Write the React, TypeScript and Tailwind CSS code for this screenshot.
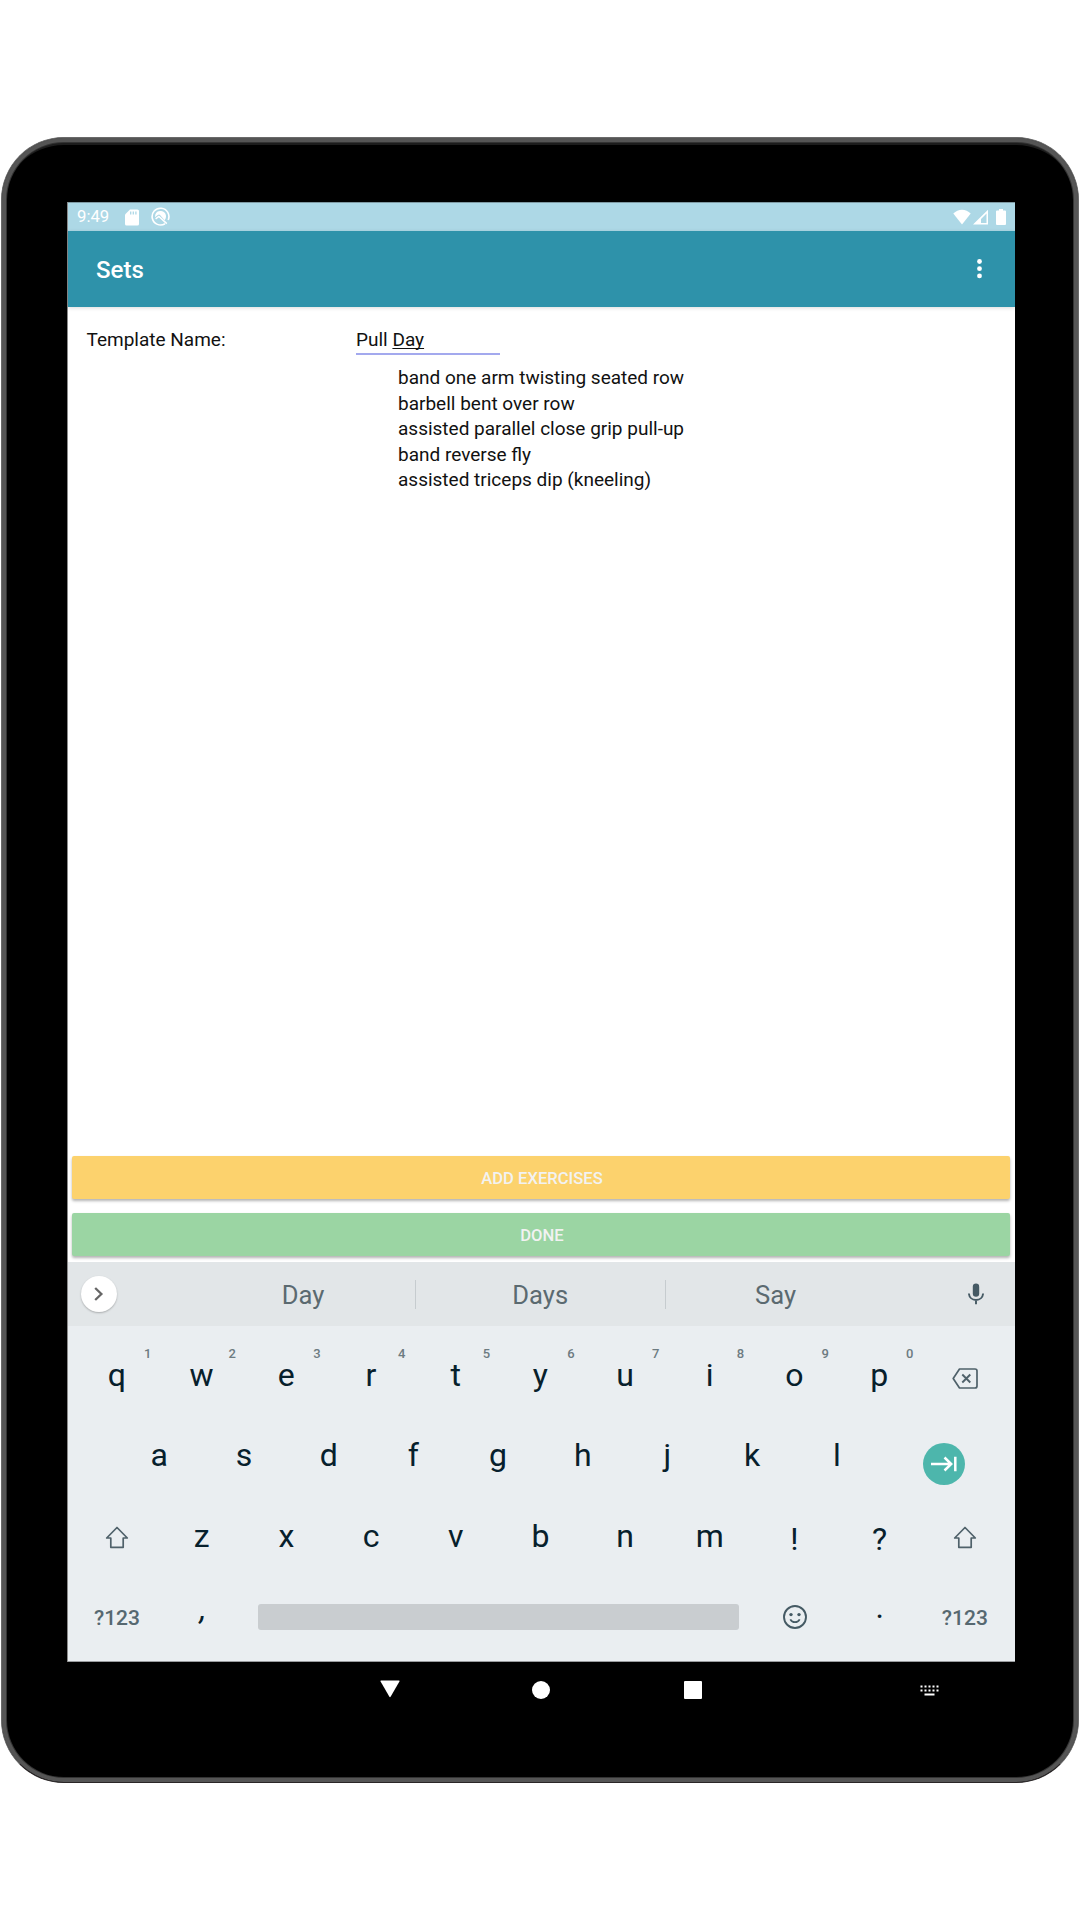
import React from "react";

type Hinted = { key: string; hint: string };

const TOP_ROW: Hinted[] = [
  { key: "q", hint: "1" },
  { key: "w", hint: "2" },
  { key: "e", hint: "3" },
  { key: "r", hint: "4" },
  { key: "t", hint: "5" },
  { key: "y", hint: "6" },
  { key: "u", hint: "7" },
  { key: "i", hint: "8" },
  { key: "o", hint: "9" },
  { key: "p", hint: "0" },
];
const HOME_ROW = ["a", "s", "d", "f", "g", "h", "j", "k", "l"];
const BOTTOM_ROW = ["z", "x", "c", "v", "b", "n", "m"];
const EXERCISES = [
  "band one arm twisting seated row",
  "barbell bent over row",
  "assisted parallel close grip pull-up",
  "band reverse fly",
  "assisted triceps dip (kneeling)",
];

function StatusBar() {
  return (
    <div className="flex h-[29px] items-center border-t border-[#7f9aa3] bg-[#add8e6] pl-[9px] pr-[9px] text-white">
      <span className="w-[48px] text-[16.7px] leading-[30px]">9:49</span>
      <svg className="h-[17px] w-[14px]" viewBox="0 0 14 17" fill="none">
        <path d="M5 0.5h7.4a1.6 1.6 0 0 1 1.6 1.6v12.8a1.6 1.6 0 0 1-1.6 1.6H1.6A1.6 1.6 0 0 1 0 14.900V5.500z" fill="#fff" />
        <path d="M5.700 2.500v3M8.300 2.500v3M10.900 2.500v3" stroke="#add8e6" strokeWidth="1.300" />
      </svg>
      <svg className="-mt-px ml-[12px] h-[19px] w-[19px]" viewBox="0 0 19 19" fill="none">
        <path d="M14 16.700A8.400 8.400 0 1 1 17.200 13" stroke="#fff" strokeWidth="1.600" />
        <path d="M4.300 7.500A5.600 5.600 0 0 1 15 8.800C15.100 10.500 14.600 12.200 13.600 13.300L9 7.900Q8 7 6.800 8L4 10.200z" fill="#fff" />
        <path d="M4.600 11.900L7.900 9.400L15.800 16.600" stroke="#fff" strokeWidth="1.500" />
      </svg>
      <div className="flex-1" />
      <svg className="-mt-px h-[16px] w-[18px]" viewBox="0 0 18 16">
        <path d="M9 15.500L0.300 4.600C2.800 2.200 5.700 0.800 9 0.800s6.200 1.400 8.700 3.800z" fill="#fff" />
      </svg>
      <svg className="ml-[2px] h-[16px] w-[15px]" viewBox="0 0 15 16">
        <path d="M0 15.500L15 0.800V15.500zM13.500 4.500L8 9.900V14h5.500z" fill="#fff" fillRule="evenodd" />
      </svg>
      <svg className="ml-[8px] h-[16px] w-[10px]" viewBox="0 0 10 16">
        <path d="M3 0h4v1.500h2a1 1 0 0 1 1 1V15a1 1 0 0 1-1 1H1a1 1 0 0 1-1-1V2.500a1 1 0 0 1 1-1h2z" fill="#fff" />
      </svg>
    </div>
  );
}

function AppBar() {
  return (
    <div className="relative z-10 flex h-[75.500px] items-center justify-between bg-[#2e92aa] pl-[28px] pr-[33px] shadow-[0_1px_4px_rgba(0,0,0,0.14)]">
      <h1 className="mt-[3px] text-[24px] font-medium leading-[28px] text-white">Sets</h1>
      <svg className="h-[20px] w-[5px]" viewBox="0 0 5 20" fill="#fff">
        <circle cx="2.500" cy="2.500" r="2.400" />
        <circle cx="2.500" cy="9.700" r="2.400" />
        <circle cx="2.500" cy="16.900" r="2.400" />
      </svg>
    </div>
  );
}

function Form() {
  return (
    <div className="flex flex-1 flex-col bg-white text-[19px] text-[#111]">
      <div className="flex pl-[18px] pt-[20px]">
        <div className="w-[270px] pl-[0.500px] leading-[25px]">Template Name:</div>
        <div className="h-[28.500px] w-[143.500px] border-b-2 border-[#a3a9ee] leading-[25px]">
          Pull <span className="underline decoration-1 underline-offset-2 [text-decoration-skip-ink:none]">Day</span>
        </div>
      </div>
      <ul className="ml-[330px] mt-[10.300px]">
        {EXERCISES.map((e) => (
          <li key={e} className="h-[25.45px] leading-[25.45px]">{e}</li>
        ))}
      </ul>
      <div className="flex-1" />
      <div className="flex flex-col gap-[14px] pb-[6.500px] pl-[4px] pr-[5px] text-[16.6px] font-medium text-[#f2f2f2]">
        <button className="h-[42.700px] rounded-[2px] bg-[#fcd26d] pl-[2px] pt-px leading-[43px] shadow-[0_2px_3px_rgba(0,0,0,0.3)]">ADD EXERCISES</button>
        <button className="h-[42.700px] rounded-[2px] bg-[#9bd5a3] pl-[2px] pt-px leading-[43px] shadow-[0_2px_3px_rgba(0,0,0,0.3)]">DONE</button>
      </div>
    </div>
  );
}

function Suggestions() {
  return (
    <div className="flex h-[64px] items-center bg-[#e2e6e8] text-[25.6px] text-[#5b6a70]">
      <div className="ml-[13px] flex h-[36px] w-[36px] items-center justify-center rounded-full bg-white shadow-[0_1px_2px_rgba(0,0,0,0.25)]">
        <svg className="h-[16px] w-[10px]" viewBox="0 0 10 16" fill="none">
          <path d="M1.200 2L7.400 8L1.200 14" stroke="#666" strokeWidth="2.300" />
        </svg>
      </div>
      <div className="ml-[73.500px] w-[224px] pl-px pt-[2px] text-center leading-[32px]">Day</div>
      <div className="h-[29px] w-px bg-[#c6cccf]" />
      <div className="w-[249.500px] pt-[2px] text-center leading-[32px]">Days</div>
      <div className="h-[29px] w-px bg-[#c6cccf]" />
      <div className="w-[219px] pt-[2px] text-center leading-[32px]">Say</div>
      <svg className="ml-[83px] h-[22px] w-[16px]" viewBox="0 0 16 22" fill="none">
        <rect x="4.800" y="0.500" width="6.400" height="13.200" rx="3.200" fill="#455a64" />
        <path d="M0.900 10.500C1.200 14.300 4 17 8 17s6.800-2.700 7.100-6.500M8 17v4.300" stroke="#455a64" strokeWidth="1.900" />
      </svg>
    </div>
  );
}

function Key({ children, hint }: { children: React.ReactNode; hint?: string }) {
  return (
    <div className="relative flex w-[84.7px] items-center justify-center">
      {children}
      {hint && (
        <span className="absolute left-[65.500px] top-[10px] w-[15px] text-center text-[13px] font-medium leading-[18px] text-[#6d7b81]">{hint}</span>
      )}
    </div>
  );
}

function Shift() {
  return (
    <svg className="mt-[3px] h-[23px] w-[24px]" viewBox="0 0 24 23" fill="none">
      <path d="M12 1.500L22.300 12H18.200V21.300H5.800V12H1.700z" stroke="#4f616a" strokeWidth="1.700" strokeLinejoin="round" />
    </svg>
  );
}

function Smiley() {
  return (
    <svg className="mt-[1px] h-[24px] w-[24px]" viewBox="0 0 24 24" fill="none">
      <circle cx="12" cy="12" r="11" stroke="#455a64" strokeWidth="1.900" />
      <circle cx="8" cy="9.600" r="1.700" fill="#455a64" />
      <circle cx="16" cy="9.600" r="1.700" fill="#455a64" />
      <path d="M7.300 14.300C8.300 16.100 10 17.200 12 17.200s3.700-1.100 4.700-2.900" stroke="#455a64" strokeWidth="1.700" />
    </svg>
  );
}

function Keyboard() {
  return (
    <div className="flex h-[336px] flex-col border-b border-[#999c9e] bg-[#eaeef1] pl-[6.600px] pt-[9px] text-[32px] leading-[40px] text-[#07202c]">
      <div className="flex h-[80.5px]">
        {TOP_ROW.map((k) => (
          <Key key={k.key} hint={k.hint}>{k.key}</Key>
        ))}
        <Key>
          <svg className="ml-[2px] mt-[6px] h-[21px] w-[26px]" viewBox="0 0 26 21" fill="none">
            <path d="M7.500 1H23a2 2 0 0 1 2 2V18a2 2 0 0 1-2 2H7.500L1.200 10.500z" stroke="#4f616a" strokeWidth="1.700" strokeLinejoin="round" />
            <path d="M10.300 6.500L18.300 14.500M18.300 6.500L10.300 14.500" stroke="#4f616a" strokeWidth="1.900" />
          </svg>
        </Key>
      </div>
      <div className="flex h-[80.5px] pl-[42.35px]">
        {HOME_ROW.map((k) => (
          <Key key={k}><span className="-mt-[2px]">{k}</span></Key>
        ))}
        <div className="flex w-[129.500px] items-center justify-center">
          <div className="mt-[16px] flex h-[42px] w-[42px] items-center justify-center rounded-full bg-[#4db6ac]">
            <svg className="h-[16px] w-[26px]" viewBox="0 0 26 16" fill="none">
              <path d="M0 8H20.500M13.500 1.500L20.200 8L13.500 14.500M24.300 0.700V15.300" stroke="#fff" strokeWidth="2.500" />
            </svg>
          </div>
        </div>
      </div>
      <div className="flex h-[80.5px]">
        <Key><Shift /></Key>
        {BOTTOM_ROW.map((k) => (
          <Key key={k}>{k}</Key>
        ))}
        <Key><span className="mt-[6px]">!</span></Key>
        <Key><span className="ml-px mt-[6px]">?</span></Key>
        <Key><span className="pl-[1.500px]"><Shift /></span></Key>
      </div>
      <div className="flex h-[80.5px] items-stretch">
        <Key><span className="mt-[2px] text-[21px] font-medium text-[#566870]">?123</span></Key>
        <Key><span className="-mt-[17px] ml-[3px] italic">,</span></Key>
        <div className="flex w-[508.2px] items-center justify-center">
          <div className="h-[26px] w-[481px] rounded-[3px] bg-[#c9cdd0]" />
        </div>
        <Key><Smiley /></Key>
        <Key><span className="-mt-[20px] ml-px">.</span></Key>
        <Key><span className="ml-[2px] mt-[2px] text-[21px] font-medium text-[#566870]">?123</span></Key>
      </div>
    </div>
  );
}

function NavBar() {
  return (
    <div className="mt-[16px] flex h-[24px] items-center pl-[313px] pr-[75px]">
      <svg className="-mt-[2px] h-[18px] w-[20px]" viewBox="0 0 20 18">
        <path d="M1.200 0.500H18.800Q20 0.500 19.400 1.600L10.600 16.800Q10 17.700 9.400 16.800L0.600 1.600Q0 0.500 1.200 0.500z" fill="#fff" />
      </svg>
      <div className="ml-[132px] h-[18px] w-[18px] rounded-full bg-white" />
      <div className="ml-[134px] h-[18px] w-[18px] rounded-[1px] bg-white" />
      <div className="flex-1" />
      <svg className="h-[11px] w-[19px]" viewBox="0 0 19 11" fill="#fff">
        {[0, 4, 8, 12, 16].map((x) => (
          <g key={x}>
            <rect x={x + 0.500} y="0.500" width="2" height="2" />
            <rect x={x + 0.500} y="4.500" width="2" height="2" />
          </g>
        ))}
        <rect x="4.500" y="8.500" width="10" height="2" />
      </svg>
    </div>
  );
}

export default function App() {
  return (
    <div className="h-[1920px] w-[1080px] bg-white px-px pt-[137px] font-['Roboto',sans-serif]">
      <div className="h-[1646px] w-[1078px] rounded-[63px] border border-[#6a6a6a] border-b-[#2a2627] bg-black pl-[65px] pr-[64px] pt-[64px] shadow-[inset_0_0_0_4px_#555,inset_0_0_0_5px_#333,inset_0_7px_0_0_#1c1c1c]">
        <div className="flex h-[1460px] w-[948px] flex-col border-l border-[#8a8a8a]">
          <StatusBar />
          <AppBar />
          <Form />
          <Suggestions />
          <Keyboard />
        </div>
        <NavBar />
      </div>
    </div>
  );
}
